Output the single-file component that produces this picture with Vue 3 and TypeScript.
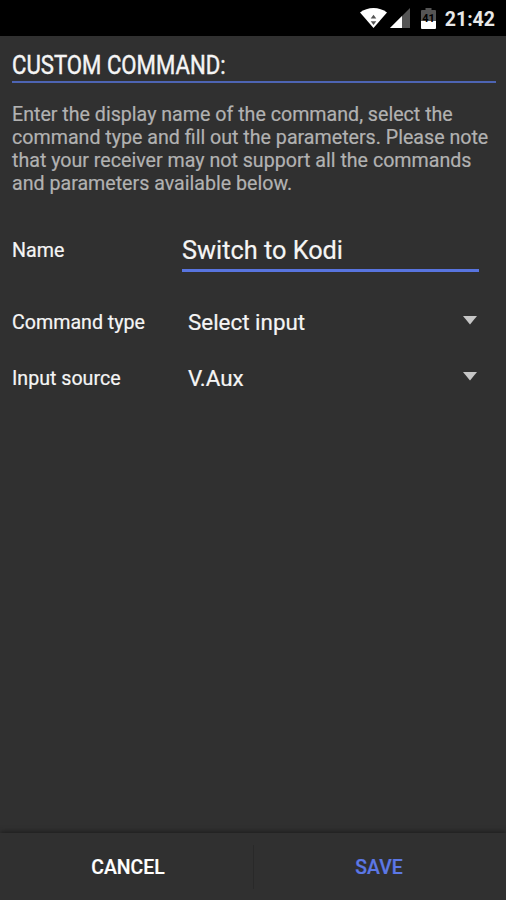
<script setup lang="ts">
import { ref } from 'vue'

interface Choice {
  label: string
  value: string
}

const commandName = ref('Switch to Kodi')
const choices: Choice[] = [
  { label: 'Command type', value: 'Select input' },
  { label: 'Input source', value: 'V.Aux' },
]
const description: string[] = [
  'Enter the display name of the command, select the',
  'command type and fill out the parameters. Please note',
  'that your receiver may not support all the commands',
  'and parameters available below.',
]
</script>

<template>
  <div class="screen">
    <header class="status">
      <svg class="wifi" viewBox="0 0 27 20" width="27" height="20">
        <path d="M0 4.6C7.500-1.4 19.500-1.4 27 4.6L13.5 20Z" fill="#fff" />
        <path d="M13.5 6.800l2.800 3.700h-5.600zM13.5 17l2.800-3.700h-5.600z" fill="#555" />
      </svg>
      <svg class="signal" viewBox="0 0 20 20" width="20" height="20">
        <path d="M0 20L20 0V20Z" fill="#555" />
        <path d="M0 20L12 8V20Z" fill="#fff" />
      </svg>
      <svg class="battery" viewBox="0 0 15 21" width="15" height="21">
        <path d="M4.500 0h6v2H14q1 0 1 1v10H0V3q0-1 1-1h3.500z" fill="#555" />
        <path d="M0 13h15v7q0 1-1 1H1q-1 0-1-1z" fill="#fff" />
        <text x="7.5" y="14" text-anchor="middle">41</text>
      </svg>
      <span class="clock">21:42</span>
    </header>

    <main class="content">
      <h1 class="title"><span class="title-text">CUSTOM COMMAND:</span></h1>
      <p class="description">
        <span v-for="line in description" :key="line" class="line">{{ line }}</span>
      </p>
      <div class="row name-row">
        <label class="label" for="name">Name</label>
        <input id="name" v-model="commandName" class="field" type="text" />
      </div>
      <div v-for="choice in choices" :key="choice.label" class="row">
        <span class="label">{{ choice.label }}</span>
        <div class="select">
          <span>{{ choice.value }}</span>
          <svg class="arrow" viewBox="0 0 14 9" width="14" height="9"><path d="M0 0H14L7 8.500Z" fill="#c6c6c6" /></svg>
        </div>
      </div>
    </main>

    <footer class="actions">
      <button class="action cancel" type="button">CANCEL</button>
      <span class="divider"></span>
      <button class="action save" type="button">SAVE</button>
    </footer>
  </div>
</template>

<style>
body {
  margin: 0;
  background: #303030;
}
</style>

<style scoped>
.screen {
  box-sizing: border-box;
  width: 506px;
  height: 900px;
  display: flex;
  flex-direction: column;
  background: #303030;
  color: #f5f5f5;
  font-family: Roboto, sans-serif;
  -webkit-text-stroke: 0.2px currentColor;
  overflow: hidden;
}
.status {
  height: 36px;
  box-sizing: border-box;
  padding: 8px 11px 0 0;
  display: flex;
  justify-content: flex-end;
  align-items: flex-start;
  background: #000;
}
.signal {
  margin-left: 3px;
}
.battery {
  margin-left: 11px;
}
.battery text {
  font: 700 11px Roboto, sans-serif;
  fill: #000;
}
.clock {
  margin-left: 9px;
  font-size: 19.5px;
  font-weight: 700;
  line-height: 23px;
  color: #e8e8e8;
  -webkit-text-stroke: 0;
}
.content {
  flex: 1;
  padding: 0 10px 0 12px;
}
.title {
  margin: 0;
  height: 47px;
  box-sizing: border-box;
  padding-top: 14px;
  border-bottom: 2px solid #4d64b3;
  font-size: 26px;
  font-weight: 400;
  line-height: 30px;
}
.title-text {
  display: inline-block;
  transform: scaleX(0.852);
  transform-origin: left;
  white-space: nowrap;
  -webkit-text-stroke: 0.45px currentColor;
}
.description {
  margin: 20px 0 0;
  color: #b2b2b2;
  font-size: 19.640px;
  line-height: 23px;
}
.line {
  display: block;
  white-space: nowrap;
}
.row {
  height: 56px;
  display: flex;
  align-items: center;
}
.name-row {
  height: 44px;
  margin: 33px 0 22px;
}
.label {
  width: 170px;
  font-size: 19.640px;
}
.field {
  box-sizing: border-box;
  width: 297px;
  height: 44px;
  padding: 3px 0 0;
  border: 0;
  border-bottom: 3px solid #5874df;
  outline: 0;
  background: transparent;
  color: inherit;
  font: 400 25.300px Roboto, sans-serif;
}
.select {
  width: 289px;
  padding-left: 6px;
  display: flex;
  align-items: center;
  justify-content: space-between;
  font-size: 22.400px;
}
.arrow {
  margin-bottom: 3px;
}
.actions {
  height: 67px;
  display: flex;
  align-items: center;
  box-shadow: 0 -1px 5px #1b1b1b;
  background: #303030;
}
.action {
  flex: 1;
  height: 100%;
  padding: 1px 0 0;
  border: 0;
  background: transparent;
  color: #fff;
  font: 500 19.400px Roboto, sans-serif;
}
.cancel {
  padding-left: 3px;
}
.save {
  padding-right: 2px;
  color: #5c78e6;
}
.divider {
  width: 1px;
  height: 44px;
  background: #292929;
}
</style>
